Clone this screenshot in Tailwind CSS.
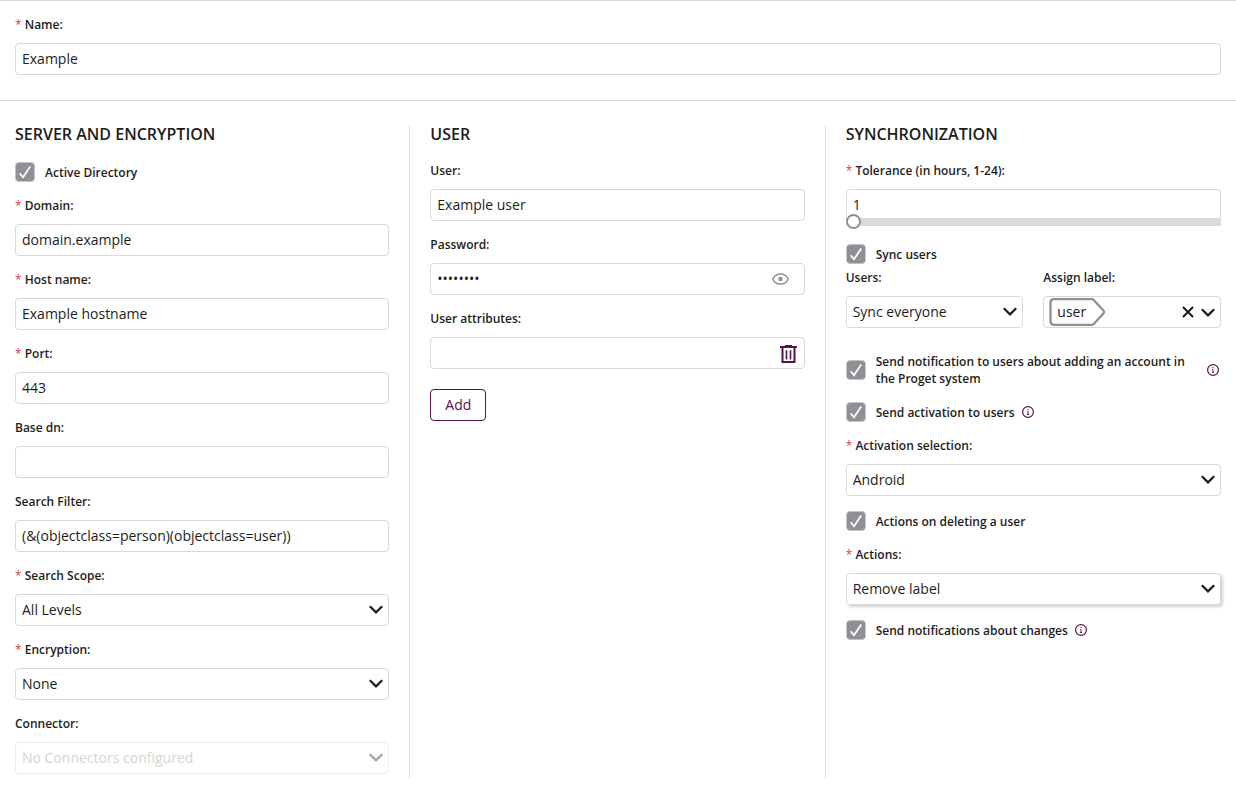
<!DOCTYPE html>
<html lang="en">
<head>
<meta charset="utf-8">
<meta name="viewport" content="width=device-width, initial-scale=1">
<title>LDAP connection</title>
<script src="https://cdn.jsdelivr.net/npm/@tailwindcss/browser@4"></script>
</head>
<body class="bg-white font-['Open_Sans',sans-serif] text-[#1d1d1b]">
<svg class="hidden">
  <symbol id="chevron" viewBox="0 0 14 9"><path d="M.8 1.2 7 7.4l6.200-6.200" fill="none" stroke="currentColor" stroke-width="2.200"/></symbol>
  <symbol id="tick" viewBox="0 0 20 20"><path d="M4.700 11.200 8 15.300 15.200 4.500" fill="none" stroke="#fff" stroke-width="1.700"/></symbol>
  <symbol id="info" viewBox="0 0 12 12"><circle cx="6" cy="6" r="5.400" fill="none" stroke="currentColor" stroke-width="1.200"/><path d="M5.200 5.500h.8v3M5 8.500h2" fill="none" stroke="currentColor" stroke-width=".9"/><circle cx="6" cy="3.600" r=".7" fill="currentColor"/></symbol>
</svg>
<form>
  <section class="flex flex-col gap-[9px] border-y border-[#d9d9d9] px-[15px] pt-[15px] pb-[25px]">
    <label for="name" class="text-xs leading-[18px] font-semibold"><span class="font-normal text-[#e0413c]">*</span> Name:</label>
    <input id="name" type="text" value="Example" class="h-8 w-full rounded border border-[#d9d9d9] px-1.5 pb-0.5 text-sm">
  </section>

  <div class="overflow-hidden px-[15px] pt-[25px]">
  <div class="-mx-5 grid grid-cols-3">
    <section class="flex min-w-0 flex-col gap-[15px] border-r border-[#e2e2e2] px-5 pb-1">
      <h2 class="mb-[5px] text-base leading-4 font-semibold">SERVER AND ENCRYPTION</h2>
      <label class="flex items-center gap-2.5 text-xs leading-4 font-semibold">
        <span class="relative flex size-5 shrink-0"><input type="checkbox" checked class="size-5 appearance-none rounded border border-[#c4c4c6] bg-[#918f94]"><svg class="pointer-events-none absolute inset-0 size-5"><use href="#tick"/></svg></span>
        <span class="pt-0.5">Active Directory</span>
      </label>
      <div class="flex flex-col gap-[9px]">
        <label for="domain" class="text-xs leading-[18px] font-semibold"><span class="font-normal text-[#e0413c]">*</span> Domain:</label>
        <input id="domain" type="text" value="domain.example" class="h-8 w-full rounded border border-[#d9d9d9] px-1.5 pb-0.5 text-sm">
      </div>
      <div class="flex flex-col gap-[9px]">
        <label for="host" class="text-xs leading-[18px] font-semibold"><span class="font-normal text-[#e0413c]">*</span> Host name:</label>
        <input id="host" type="text" value="Example hostname" class="h-8 w-full rounded border border-[#d9d9d9] px-1.5 pb-0.5 text-sm">
      </div>
      <div class="flex flex-col gap-[9px]">
        <label for="port" class="text-xs leading-[18px] font-semibold"><span class="font-normal text-[#e0413c]">*</span> Port:</label>
        <input id="port" type="text" value="443" class="h-8 w-full rounded border border-[#d9d9d9] px-1.5 pb-0.5 text-sm">
      </div>
      <div class="flex flex-col gap-[9px]">
        <label for="basedn" class="text-xs leading-[18px] font-semibold">Base dn:</label>
        <input id="basedn" type="text" class="h-8 w-full rounded border border-[#d9d9d9] px-1.5 pb-0.5 text-sm">
      </div>
      <div class="flex flex-col gap-[9px]">
        <label for="filter" class="text-xs leading-[18px] font-semibold">Search Filter:</label>
        <input id="filter" type="text" value="(&amp;(objectclass=person)(objectclass=user))" class="h-8 w-full rounded border border-[#d9d9d9] px-1.5 pb-0.5 text-sm">
      </div>
      <div class="flex flex-col gap-[9px]">
        <label for="scope" class="text-xs leading-[18px] font-semibold"><span class="font-normal text-[#e0413c]">*</span> Search Scope:</label>
        <div class="relative flex">
          <select id="scope" class="h-8 w-full appearance-none rounded border border-[#d9d9d9] px-1.5 text-sm"><option>All Levels</option></select>
          <svg class="pointer-events-none absolute top-[11px] right-1.5 h-[9px] w-3.5"><use href="#chevron"/></svg>
        </div>
      </div>
      <div class="flex flex-col gap-[9px]">
        <label for="encryption" class="text-xs leading-[18px] font-semibold"><span class="font-normal text-[#e0413c]">*</span> Encryption:</label>
        <div class="relative flex">
          <select id="encryption" class="h-8 w-full appearance-none rounded border border-[#d9d9d9] px-1.5 text-sm"><option>None</option></select>
          <svg class="pointer-events-none absolute top-[11px] right-1.5 h-[9px] w-3.5"><use href="#chevron"/></svg>
        </div>
      </div>
      <div class="flex flex-col gap-[9px]">
        <label for="connector" class="text-xs leading-[18px] font-semibold">Connector:</label>
        <div class="relative flex">
          <select id="connector" disabled class="h-8 w-full appearance-none rounded border border-[#ececec] px-1.5 text-sm text-[#d4d4d4] opacity-100"><option>No Connectors configured</option></select>
          <svg class="pointer-events-none absolute top-[11px] right-1.5 h-[9px] w-3.5 text-[#a5a5a5]"><use href="#chevron"/></svg>
        </div>
      </div>
    </section>

    <section class="flex min-w-0 flex-col gap-[15px] border-r border-[#e2e2e2] px-5 pb-1">
      <h2 class="mb-[5px] text-base leading-4 font-semibold">USER</h2>
      <div class="flex flex-col gap-[9px]">
        <label for="user" class="text-xs leading-[18px] font-semibold">User:</label>
        <input id="user" type="text" value="Example user" class="h-8 w-full rounded border border-[#d9d9d9] px-1.5 pb-0.5 text-sm">
      </div>
      <div class="flex flex-col gap-[9px]">
        <label for="password" class="text-xs leading-[18px] font-semibold">Password:</label>
        <div class="relative flex">
          <input id="password" type="password" value="password" class="h-8 w-full rounded border border-[#d9d9d9] pr-10 pb-0.5 pl-1.5 text-sm">
          <button type="button" aria-label="Show password" class="absolute top-2 right-4 flex text-[#8f8f91]">
            <svg class="h-4 w-[17px]" viewBox="0 0 17 16" fill="none" stroke="currentColor"><path d="M.8 8C2.300 4.500 5 2.900 8.500 2.900S14.700 4.500 16.200 8c-1.500 3.500-4.200 5.100-7.700 5.100S2.300 11.500.8 8Z" stroke-width="1.500"/><circle cx="8.500" cy="8" r="2.200" fill="currentColor" stroke="none"/></svg>
          </button>
        </div>
      </div>
      <div class="flex flex-col gap-[9px]">
        <label for="attributes" class="text-xs leading-[18px] font-semibold">User attributes:</label>
        <div class="relative flex">
          <input id="attributes" type="text" class="h-8 w-full rounded border border-[#d9d9d9] pr-8 pb-0.5 pl-1.5 text-sm">
          <button type="button" aria-label="Remove attribute" class="absolute top-2 right-2 flex text-[#55124f]">
            <svg class="h-[18px] w-[17px]" viewBox="0 0 17 18" fill="none" stroke="currentColor"><path d="M0 2h17M5 .8h7" stroke-width="1.800"/><path d="M2.500 2.500V17h12V2.500" stroke-width="2"/><path d="M6.500 5.300v9.200M10.500 5.300v9.200" stroke-width="1.600"/></svg>
          </button>
        </div>
      </div>
      <button type="button" class="mt-[5px] h-8 self-start rounded border border-[#55124f] px-3.5 text-sm text-[#55124f]">Add</button>
    </section>

    <section class="flex min-w-0 flex-col gap-[15px] px-5 pb-1">
      <h2 class="mb-[5px] text-base leading-4 font-semibold">SYNCHRONIZATION</h2>
      <div class="flex flex-col pb-[3px]">
        <label for="tolerance" class="mb-[9px] text-xs leading-[18px] font-semibold"><span class="font-normal text-[#e0413c]">*</span> Tolerance (in hours, 1-24):</label>
        <input id="tolerance" type="text" value="1" class="h-8 w-full rounded border border-[#d9d9d9] px-1.5 pb-0.5 text-sm">
        <input type="range" min="1" max="24" value="1" aria-label="Tolerance in hours" class="-mt-[3px] h-2 w-full appearance-none bg-[#d9d9d9] [&::-webkit-slider-thumb]:-mt-px [&::-webkit-slider-thumb]:size-[15px] [&::-webkit-slider-thumb]:appearance-none [&::-webkit-slider-thumb]:rounded-full [&::-webkit-slider-thumb]:border-2 [&::-webkit-slider-thumb]:border-solid [&::-webkit-slider-thumb]:border-[#8f8f91] [&::-webkit-slider-thumb]:bg-white">
      </div>
      <div class="flex flex-col gap-[5px]">
        <label class="flex items-center gap-2.5 text-xs leading-4 font-semibold">
          <span class="relative flex size-5 shrink-0"><input type="checkbox" checked class="size-5 appearance-none rounded border border-[#c4c4c6] bg-[#918f94]"><svg class="pointer-events-none absolute inset-0 size-5"><use href="#tick"/></svg></span>
          <span class="pt-0.5">Sync users</span>
        </label>
        <div class="grid grid-cols-2 gap-5">
          <div class="flex flex-col gap-[9px]">
            <label for="users" class="text-xs leading-[18px] font-semibold">Users:</label>
            <div class="relative flex">
              <select id="users" class="h-8 w-full appearance-none rounded border border-[#d9d9d9] px-1.5 text-sm"><option>Sync everyone</option></select>
              <svg class="pointer-events-none absolute top-[11px] right-1.5 h-[9px] w-3.5"><use href="#chevron"/></svg>
            </div>
          </div>
          <div class="flex flex-col gap-[9px]">
            <span id="assign" class="text-xs leading-[18px] font-semibold">Assign label:</span>
            <div role="group" aria-labelledby="assign" class="flex h-8 items-center rounded border border-[#d9d9d9] px-[5px]">
              <span class="relative flex h-7 w-14 items-center pl-2 text-sm">
                <svg class="absolute inset-0 h-7 w-14" viewBox="0 0 56 28" fill="none" stroke="#8f8f8f" stroke-width="2.300"><path d="M5 1.200h37.500q1.500 0 2.500 1l9 9.800q1.800 2 0 4l-9 9.800q-1 1-2.500 1H5q-3.500 0-3.500-3.500v-18.600Q1.500 1.200 5 1.200Z"/></svg>
                <span class="relative">user</span>
              </span>
              <button type="button" aria-label="Clear labels" class="ml-auto flex"><svg class="size-3" viewBox="0 0 12 12" fill="none" stroke="currentColor" stroke-width="2"><path d="m1 1 10 10M11 1 1 11"/></svg></button>
              <button type="button" aria-label="Open labels" class="ml-[7px] flex"><svg class="h-[9px] w-3.5"><use href="#chevron"/></svg></button>
            </div>
          </div>
        </div>
      </div>
      <div class="mt-2.5 flex items-center justify-between">
        <label class="flex items-center gap-2.5 text-xs leading-[17px] font-semibold">
          <span class="relative flex size-5 shrink-0"><input type="checkbox" checked class="size-5 appearance-none rounded border border-[#c4c4c6] bg-[#918f94]"><svg class="pointer-events-none absolute inset-0 size-5"><use href="#tick"/></svg></span>
          <span>Send notification to users about adding an account in the Proget system</span>
        </label>
        <button type="button" aria-label="More information" class="mr-0.5 ml-4 flex text-[#55124f]"><svg class="size-3"><use href="#info"/></svg></button>
      </div>
      <div class="flex items-center gap-[7px]">
        <label class="flex items-center gap-2.5 text-xs leading-4 font-semibold">
          <span class="relative flex size-5 shrink-0"><input type="checkbox" checked class="size-5 appearance-none rounded border border-[#c4c4c6] bg-[#918f94]"><svg class="pointer-events-none absolute inset-0 size-5"><use href="#tick"/></svg></span>
          <span class="pt-0.5">Send activation to users</span>
        </label>
        <button type="button" aria-label="More information" class="flex text-[#55124f]"><svg class="size-3"><use href="#info"/></svg></button>
      </div>
      <div class="flex flex-col gap-[9px]">
        <label for="activation" class="text-xs leading-[18px] font-semibold"><span class="font-normal text-[#e0413c]">*</span> Activation selection:</label>
        <div class="relative flex">
          <select id="activation" class="h-8 w-full appearance-none rounded border border-[#d9d9d9] px-1.5 text-sm"><option>Android</option></select>
          <svg class="pointer-events-none absolute top-[11px] right-1.5 h-[9px] w-3.5"><use href="#chevron"/></svg>
        </div>
      </div>
      <label class="flex items-center gap-2.5 text-xs leading-4 font-semibold">
        <span class="relative flex size-5 shrink-0"><input type="checkbox" checked class="size-5 appearance-none rounded border border-[#c4c4c6] bg-[#918f94]"><svg class="pointer-events-none absolute inset-0 size-5"><use href="#tick"/></svg></span>
        <span class="pt-0.5">Actions on deleting a user</span>
      </label>
      <div class="flex flex-col gap-[9px]">
        <label for="actions" class="text-xs leading-[18px] font-semibold"><span class="font-normal text-[#e0413c]">*</span> Actions:</label>
        <div class="relative flex">
          <select id="actions" class="h-8 w-full appearance-none rounded border border-[#d9d9d9] px-1.5 text-sm shadow-[2px_2px_3px_rgba(0,0,0,0.18)]"><option>Remove label</option></select>
          <svg class="pointer-events-none absolute top-[11px] right-1.5 h-[9px] w-3.5"><use href="#chevron"/></svg>
        </div>
      </div>
      <div class="flex items-center gap-[7px]">
        <label class="flex items-center gap-2.5 text-xs leading-4 font-semibold">
          <span class="relative flex size-5 shrink-0"><input type="checkbox" checked class="size-5 appearance-none rounded border border-[#c4c4c6] bg-[#918f94]"><svg class="pointer-events-none absolute inset-0 size-5"><use href="#tick"/></svg></span>
          <span class="pt-0.5">Send notifications about changes</span>
        </label>
        <button type="button" aria-label="More information" class="flex text-[#55124f]"><svg class="size-3"><use href="#info"/></svg></button>
      </div>
    </section>
  </div>
  </div>
</form>
</body>
</html>
